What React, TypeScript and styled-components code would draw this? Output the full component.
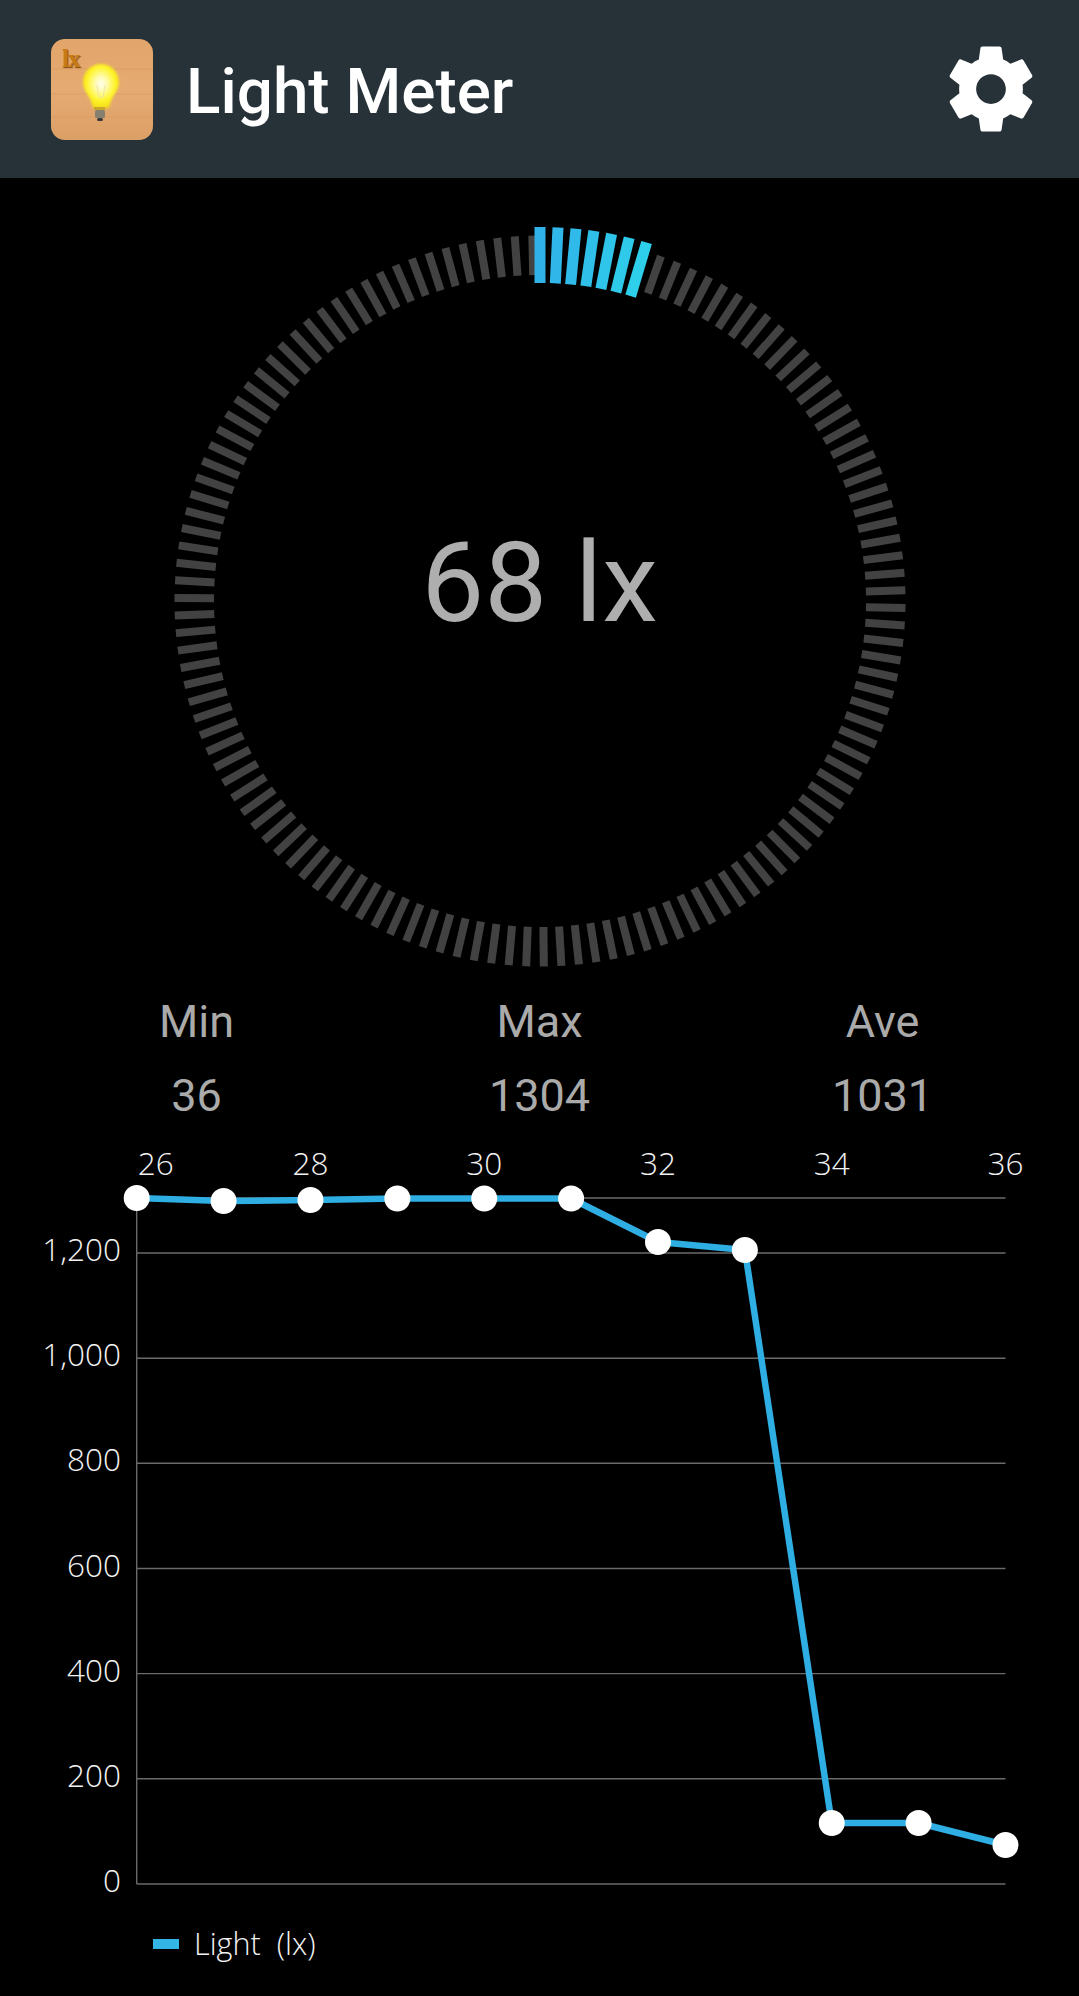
import React from "react";
import styled, { createGlobalStyle } from "styled-components";

const Global = createGlobalStyle`
  html, body { margin: 0; padding: 0; background: #000; }
`;
const Page = styled.div`
  width: 1079px; height: 1996px; background: #000; overflow: hidden;
  display: flex; flex-direction: column; font-family: Roboto, sans-serif;
`;
const Header = styled.header`
  height: 178px; background: #263238; display: flex; align-items: center;
  padding: 0 37px 0 51px; flex: none;
`;
const LogoBox = styled.div`
  position: relative; width: 102px; height: 101px; flex: none;
`;
const LogoArt = styled.svg`
  display: block;
`;
const LogoLabel = styled.span`
  position: absolute; left: 11px; top: 7px; font: bold 25px/26px "Liberation Serif", serif;
  color: #c87a14; text-shadow: 1px 1px 1px #7a4a10; letter-spacing: -1px;
`;
const Title = styled.h1`
  margin: 5px 0 0 33px; font-size: 63.8px; line-height: 80px; font-weight: 500; color: #fff; flex: 1;
`;
const GaugeWrap = styled.div`
  position: relative; width: 780px; height: 780px; margin: 33px auto 0; flex: none;
`;
const GaugeArt = styled.svg`
  display: block;
`;
const GaugeValue = styled.div`
  position: absolute; left: 0; right: 0; top: 309px; text-align: center;
  font-size: 112px; line-height: 126px; font-weight: 400; color: #aeaeae;
`;
const Stats = styled.div`
  display: grid; grid-template-columns: repeat(3, 343px); justify-content: center;
  margin-top: -6px; flex: none;
`;
const Stat = styled.div`
  text-align: center; color: #aaa; font-size: 45px; line-height: 74px; font-weight: 400;
`;
const ChartSvg = styled.svg`
  display: block; width: 1079px; height: 861px; flex: none; margin-top: 2px;
`;
const AxisText = styled.text<{ $size?: number }>`
  font-family: "Open Sans", sans-serif; font-weight: 300; font-size: ${(p) => p.$size ?? 31.5}px; fill: #f2f2f2;
`;

const STEP = 2.76;
const CX = 390, CY = 390;

function Tick({ angle, r0, r1, w, color }: { angle: number; r0: number; r1: number; w: number; color: string }) {
  return <rect x={CX - w / 2} y={CY - r1} width={w} height={r1 - r0} fill={color} transform={`rotate(${angle} ${CX} ${CY})`} />;
}

function Gauge() {
  const gray = Array.from({ length: 131 }, (_, i) => i * STEP);
  const blues = ["#30b2e8", "#30b6e8", "#30bae9", "#2fbfe9", "#2fc4ea", "#2fc9ea", "#2ecfeb"];
  return (
    <GaugeArt width="780" height="780" viewBox="0 0 780 780">
      {gray.map((a) => <Tick key={a} angle={a} r0={326} r1={365.5} w={8} color="#424242" />)}
      {blues.map((c, i) => <Tick key={i} angle={i * STEP} r0={318} r1={374} w={11} color={c} />)}
    </GaugeArt>
  );
}

const pts = [1198, 1201, 1200, 1198.500, 1198.500, 1198.500, 1242, 1250, 1823, 1823, 1845];
const X0 = 136.7, DX = 86.88, TOP = 1135;
const gy = [1884, 1778.8, 1673.6, 1568.5, 1463.3, 1358.2, 1253];
const gl = ["0", "200", "400", "600", "800", "1,000", "1,200"];

function Chart() {
  const line = pts.map((y, i) => `${(X0 + i * DX).toFixed(1)},${y - TOP}`).join(" ");
  const RIGHT = X0 + 10 * DX;
  return (
    <ChartSvg viewBox="0 0 1079 861">
      <line x1={X0} x2={X0} y1={1198 - TOP} y2={1884 - TOP} stroke="#6a6a6a" strokeWidth="1.4" />
      <line x1={X0} x2={RIGHT} y1={1198 - TOP} y2={1198 - TOP} stroke="#6a6a6a" strokeWidth="1.4" />
      {gy.map((y, i) => (
        <React.Fragment key={y}>
          <line x1={X0} x2={RIGHT} y1={y - TOP} y2={y - TOP} stroke="#6a6a6a" strokeWidth="1.4" />
          <AxisText x={121} y={y - TOP + 8} textAnchor="end">{gl[i]}</AxisText>
        </React.Fragment>
      ))}
      {[26, 28, 30, 32, 34, 36].map((n, i) => (
        <AxisText key={n} x={i === 0 ? X0 + 19 : X0 + i * 2 * DX} y={1175 - TOP} textAnchor="middle">{n}</AxisText>
      ))}
      <polyline points={line} fill="none" stroke="#2eaee2" strokeWidth="6.5" strokeLinejoin="round" />
      {pts.map((y, i) => <circle key={i} cx={X0 + i * DX} cy={y - TOP} r="13" fill="#fff" />)}
      <rect x="153" y={1939 - TOP} width="26" height="10" fill="#33b5e5" />
      <AxisText $size={30.6} x="194" y={1955 - TOP} xmlSpace="preserve">Light  (lx)</AxisText>
    </ChartSvg>
  );
}

export default function App() {
  return (
    <Page>
      <Global />
      <Header>
        <LogoBox>
          <LogoArt width="102" height="101" viewBox="0 0 102 101">
            <defs>
              <linearGradient id="wood" x1="0" y1="0" x2="0" y2="1">
                <stop offset="0" stopColor="#e2a56b" />
                <stop offset="0.5" stopColor="#e6ab72" />
                <stop offset="1" stopColor="#dca067" />
              </linearGradient>
              <radialGradient id="bulb" cx="0.5" cy="0.45" r="0.55">
                <stop offset="0" stopColor="#fffef2" />
                <stop offset="0.3" stopColor="#fffbb0" />
                <stop offset="0.7" stopColor="#fff42a" />
                <stop offset="1" stopColor="#f2dc18" />
              </radialGradient>
              <filter id="glow" x="-30%" y="-30%" width="160%" height="160%">
                <feGaussianBlur stdDeviation="1" />
              </filter>
            </defs>
            <rect width="102" height="101" rx="14" fill="url(#wood)" />
            <path d="M0 55h102M0 78h102M0 30h102" stroke="#d99c62" strokeWidth="1.500" opacity="0.5" />
            <path d="M50 25c-10 0-18 8-18 18 0 7 4 11 7 17 1.500 3 2 6 3 9h16c1-3 1.500-6 3-9 3-6 7-10 7-17 0-10-8-18-18-18z" fill="url(#bulb)" filter="url(#glow)" />
            <path d="M46 46l2 12h4l2-12" fill="none" stroke="#e8dfa8" strokeWidth="0.800" />
            <rect x="43" y="68" width="11" height="3" fill="#c9a52a" />
            <rect x="44" y="71" width="10" height="8" rx="1.500" fill="#85806f" />
            <rect x="46" y="79" width="6" height="3" rx="1.500" fill="#3a3a3a" />
          </LogoArt>
          <LogoLabel>lx</LogoLabel>
        </LogoBox>
        <Title>Light Meter</Title>
        <svg width="102" height="102" viewBox="0 0 24 24" fill="#fff">
          <path d="M19.43 12.98c.04-.32.07-.64.07-.98s-.03-.66-.07-.98l2.11-1.65c.19-.15.24-.42.12-.64l-2-3.46c-.12-.22-.39-.3-.61-.22l-2.49 1c-.52-.4-1.08-.73-1.69-.98l-.38-2.65C14.46 2.18 14.25 2 14 2h-4c-.25 0-.46.18-.49.42l-.38 2.65c-.61.25-1.17.59-1.69.98l-2.49-1c-.23-.09-.49 0-.61.22l-2 3.46c-.13.22-.07.49.12.64l2.11 1.65c-.04.32-.07.65-.07.98s.03.66.07.98l-2.11 1.65c-.19.15-.24.42-.12.64l2 3.46c.12.22.39.3.61.22l2.49-1c.52.4 1.08.73 1.69.98l.38 2.65c.03.24.24.42.49.42h4c.25 0 .46-.18.49-.42l.38-2.65c.61-.25 1.17-.59 1.69-.98l2.49 1c.23.09.49 0 .61-.22l2-3.46c.12-.22.07-.49-.12-.64l-2.11-1.65zM12 15.500c-1.930 0-3.500-1.570-3.500-3.500s1.570-3.500 3.500-3.500 3.500 1.570 3.500 3.500-1.570 3.500-3.500 3.500z" />
        </svg>
      </Header>
      <GaugeWrap>
        <Gauge />
        <GaugeValue>68 lx</GaugeValue>
      </GaugeWrap>
      <Stats>
        <Stat>Min<br />36</Stat>
        <Stat>Max<br />1304</Stat>
        <Stat>Ave<br />1031</Stat>
      </Stats>
      <Chart />
    </Page>
  );
}
